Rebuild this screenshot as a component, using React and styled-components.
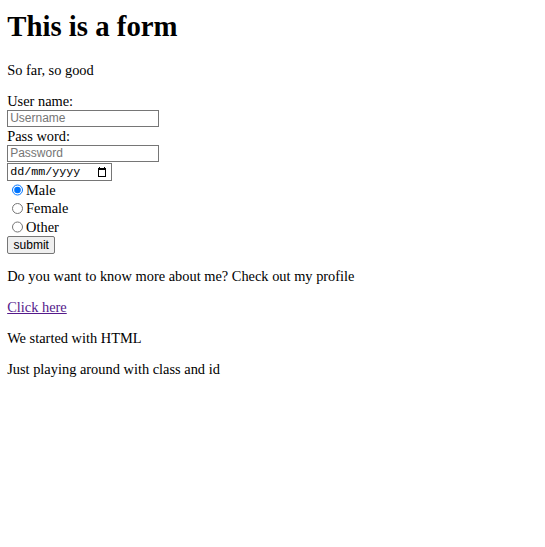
import React from 'react'
import styled, { createGlobalStyle } from 'styled-components'

const GlobalStyle = createGlobalStyle`
    body {
        margin: 7.2px;
        font-family: "Liberation Serif", "Times New Roman", serif;
        font-size: 14.4px;
        line-height: 1.15;
        color: #000;
        background: #fff;
    }
`

const Title = styled.h1`
    font-size: 28.8px;
    font-weight: bold;
    margin: 2.5px 0 19.3px;
`

const Text = styled.p`
    margin: 14.4px 0;
`

const Form = styled.form`
    display: flex;
    flex-direction: column;
    align-items: flex-start;
    margin: 0;
`

const Label = styled.label`
    display: block;
    margin-top: ${props => props.$top || 0}px;
`

const TextField = styled.input`
    box-sizing: border-box;
    width: 152px;
    height: 17px;
    padding: 1px 2px;
    margin: ${props => props.$top || 0}px 0 0;
    border: 1px solid #767676;
    border-radius: 0;
    font-family: "Liberation Sans", Arial, sans-serif;
    font-size: 12px;
    &::placeholder {
        color: #757575;
    }
`

const DateBox = styled.label`
    box-sizing: border-box;
    display: flex;
    align-items: center;
    width: 105px;
    height: 18px;
    margin-top: 1px;
    padding: 0 5px 0 2px;
    border: 1px solid #767676;
    background: #fff;
`

const DateInput = styled.input`
    flex: 1;
    width: 0;
    padding: 0;
    margin: 0;
    border: none;
    outline: none;
    font-family: "Liberation Mono", "Courier New", monospace;
    font-size: 11.7px;
    color: #000;
    &::placeholder {
        color: #000;
    }
`

const CalendarIcon = styled.svg`
    flex: none;
    width: 8px;
    height: 10px;
`

const RadioRow = styled.div`
    display: flex;
    align-items: center;
    height: 18.5px;
`

const Radio = styled.input`
    width: 11.7px;
    height: 11.7px;
    margin: 0 2.7px 0 4.5px;
    accent-color: #0075ff;
`

const Submit = styled.input`
    box-sizing: border-box;
    height: 17.5px;
    padding: 0 5.4px;
    margin: 0;
    font-family: "Liberation Sans", Arial, sans-serif;
    font-size: 12px;
    color: #000;
    background: #efefef;
    border: 1px solid #767676;
    border-radius: 2px;
`

const ProfileLink = styled.a`
    color: #551a8b;
    text-decoration: underline;
`

function App() {
    const genders = ['Male', 'Female', 'Other']

    return (
        <>
            <GlobalStyle />
            <Title>This is a form</Title>
            <Text>So far, so good</Text>
            <Form onSubmit={e => e.preventDefault()}>
                <Label htmlFor="username">User name:</Label>
                <TextField type="text" id="username" placeholder="Username" />
                <Label htmlFor="password" $top={1}>Pass word:</Label>
                <TextField type="password" id="password" placeholder="Password" $top={0.5} />
                <DateBox>
                    <DateInput type="text" id="birthday" placeholder="dd/mm/yyyy" />
                    <CalendarIcon viewBox="0 0 8 10">
                        <rect x="0.5" y="1.5" width="7" height="8" fill="none" stroke="#000" />
                        <rect x="0" y="1" width="8" height="2" fill="#000" />
                        <rect x="1" y="0" width="1" height="1.5" fill="#000" />
                        <rect x="6" y="0" width="1" height="1.5" fill="#000" />
                    </CalendarIcon>
                </DateBox>
                {genders.map((gender, i) => (
                    <RadioRow key={gender}>
                        <Radio type="radio" id={gender.toLowerCase()} name="gender" value={gender.toLowerCase()} defaultChecked={i === 0} />
                        <label htmlFor={gender.toLowerCase()}>{gender}</label>
                    </RadioRow>
                ))}
                <Submit type="submit" value="submit" />
            </Form>
            <Text>Do you want to know more about me? Check out my profile</Text>
            <Text><ProfileLink href="#profile">Click here</ProfileLink></Text>
            <Text>We started with HTML</Text>
            <Text>Just playing around with class and id</Text>
        </>
    )
}

export default App
